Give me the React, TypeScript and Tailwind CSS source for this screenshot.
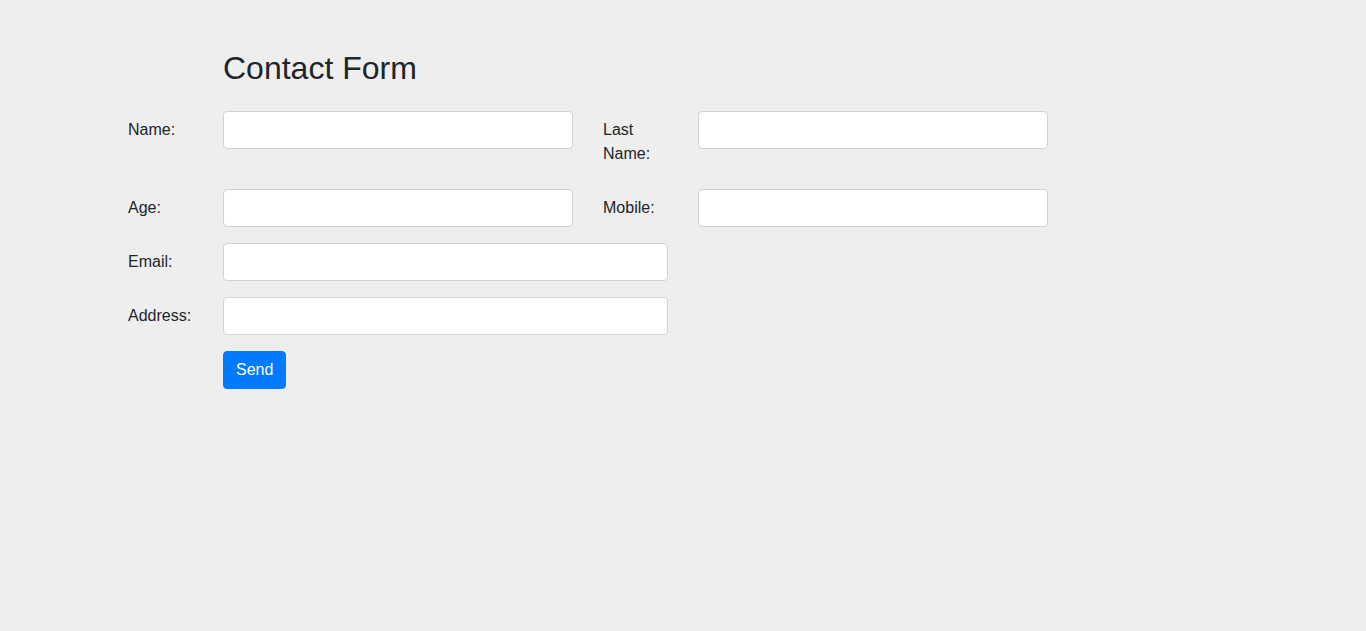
import React from "react";

const labelCls = "w-[95px] shrink-0 px-[15px] py-[7px] text-base leading-6";
const inputCls =
  "block h-[38px] w-full rounded-[4px] border border-[#ced4da] bg-white px-3 py-[6px] text-base leading-6 text-[#495057] outline-none";

function Field({ label, span }: { label: string; span: "w-[380px]" | "w-[475px]" }) {
  return (
    <>
      <label className={labelCls}>{label}</label>
      <div className={`${span} shrink-0 px-[15px]`}>
        <input type="text" className={inputCls} />
      </div>
    </>
  );
}

export default function App() {
  return (
    <div
      className="min-h-screen bg-[#eeeeee] text-[#212529]"
      style={{ fontFamily: '"Liberation Sans", Arial, sans-serif' }}
    >
      <div className="mx-auto w-[1140px] px-[15px] pt-[49px]">
        <div className="-mx-[15px] flex">
          <div className="ml-[95px] px-[15px]">
            <h2 className="mb-[24px] text-[32px] font-medium leading-[1.2]">Contact Form</h2>
          </div>
        </div>

        <form onSubmit={(e) => e.preventDefault()}>
          <div className="-mx-[15px] mb-4 flex items-start">
            <Field label="Name:" span="w-[380px]" />
            <Field label="Last Name:" span="w-[380px]" />
          </div>
          <div className="-mx-[15px] mb-4 flex items-start">
            <Field label="Age:" span="w-[380px]" />
            <Field label="Mobile:" span="w-[380px]" />
          </div>
          <div className="-mx-[15px] mb-4 flex items-start">
            <Field label="Email:" span="w-[475px]" />
          </div>
          <div className="-mx-[15px] mb-4 flex items-start">
            <Field label="Address:" span="w-[475px]" />
          </div>
          <div className="-mx-[15px] flex">
            <div className="ml-[95px] px-[15px]">
              <button
                type="submit"
                className="rounded-[4px] border border-[#007bff] bg-[#007bff] px-3 py-[6px] text-base leading-6 text-white"
              >
                Send
              </button>
            </div>
          </div>
        </form>
      </div>
    </div>
  );
}
